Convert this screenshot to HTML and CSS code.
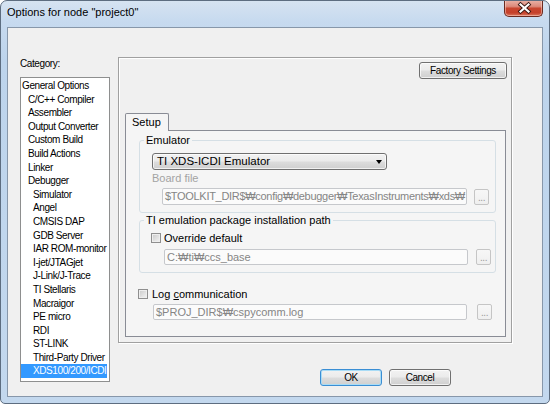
FILE: index.html
```html
<!DOCTYPE html>
<html>
<head>
<meta charset="utf-8">
<link rel="stylesheet" href="styles.css">
</head>
<body>
<div class="window">
  <div class="titlebar">
    <span class="title">Options for node "project0"</span>
    <div class="close">
      <svg width="39" height="17" viewBox="0 0 39 17">
        <path d="M16.5 4.5 L24.5 11.5 M24.5 4.5 L16.5 11.5" stroke="#3a1712" stroke-width="4" stroke-linecap="square" fill="none"/>
        <path d="M16.5 4.5 L24.5 11.5 M24.5 4.5 L16.5 11.5" stroke="#ffffff" stroke-width="2.2" stroke-linecap="square" fill="none"/>
      </svg>
    </div>
  </div>
  <div class="client">
    <div class="leftcol">
      <div class="cat-label">Category:</div>
      <ul class="list">
        <li class="l0">General Options</li>
        <li class="l1">C/C++ Compiler</li>
        <li class="l1">Assembler</li>
        <li class="l1">Output Converter</li>
        <li class="l1">Custom Build</li>
        <li class="l1">Build Actions</li>
        <li class="l1">Linker</li>
        <li class="l1">Debugger</li>
        <li class="l2">Simulator</li>
        <li class="l2">Angel</li>
        <li class="l2">CMSIS DAP</li>
        <li class="l2">GDB Server</li>
        <li class="l2">IAR ROM-monitor</li>
        <li class="l2">I-jet/JTAGjet</li>
        <li class="l2">J-Link/J-Trace</li>
        <li class="l2">TI Stellaris</li>
        <li class="l2">Macraigor</li>
        <li class="l2">PE micro</li>
        <li class="l2">RDI</li>
        <li class="l2">ST-LINK</li>
        <li class="l2">Third-Party Driver</li>
        <li class="l2 sel">XDS100/200/ICDI</li>
      </ul>
    </div>
    <div class="rightcol">
      <div class="panel">
        <div class="panel-top"><button class="btn factory">Factory Settings</button></div>
        <div class="tabs"><div class="tab">Setup</div></div>
        <div class="tabpage">
          <fieldset class="group g1">
            <legend>Emulator</legend>
            <div class="gbody g1body">
              <div class="combo"><span>TI XDS-ICDI Emulator</span><span class="arrow"></span></div>
              <div class="dim-label">Board file</div>
              <div class="path-row">
                <div class="textbox tb1">$TOOLKIT_DIR$₩config₩debugger₩TexasInstruments₩xds₩</div>
                <div class="browse b1">...</div>
              </div>
            </div>
          </fieldset>
          <fieldset class="group g2">
            <legend>TI emulation package installation path</legend>
            <div class="gbody g2body">
              <div class="check-row"><span class="checkbox"></span><span class="check-label">Override default</span></div>
              <div class="path-row r2">
                <div class="textbox tb2">C:₩ti₩ccs_base</div>
                <div class="browse b2">...</div>
              </div>
            </div>
          </fieldset>
          <div class="logsec">
            <div class="check-row logrow"><span class="checkbox"></span><span class="check-label">Log <span class="u">c</span>ommunication</span></div>
            <div class="path-row r3">
              <div class="textbox tb3">$PROJ_DIR$₩cspycomm.log</div>
              <div class="browse b3">...</div>
            </div>
          </div>
        </div>
      </div>
      <div class="buttons">
        <button class="btn ok">OK</button>
        <button class="btn cancel">Cancel</button>
      </div>
    </div>
  </div>
</div>
</body>
</html>
```
FILE: styles.css
```css
* { box-sizing: border-box; }
html, body { margin: 0; padding: 0; }
body {
  width: 550px;
  height: 404px;
  overflow: hidden;
  background: #ffffff;
  font-family: "Liberation Sans", Arial, sans-serif;
  color: #000;
}
.window {
  width: 550px;
  height: 404px;
  border: 1px solid #5d6d80;
  border-radius: 7px 7px 5px 5px;
  background: linear-gradient(180deg, #d6e3f1 0px, #c7daef 20px, #bdd4ec 60px, #c3d8ee 100%);
  display: flex;
  flex-direction: column;
  overflow: hidden;
}
.titlebar {
  height: 26px;
  display: flex;
  align-items: flex-start;
  justify-content: space-between;
  padding: 0 6px;
}
.title {
  font-size: 11px;
  line-height: 14px;
  margin-top: 4px;
  color: #000;
}
.close {
  width: 39px;
  height: 17px;
  margin-top: -1px;
  border: 1px solid #6a2a20;
  border-top: none;
  border-radius: 0 0 5px 5px;
  background: linear-gradient(180deg, #eab4a8 0%, #dc8a7b 40%, #c8462f 52%, #c5402a 80%, #d9775e 100%);
  box-shadow: inset 0 0 0 1px rgba(255, 220, 210, 0.5);
  position: relative;
}
.close svg { display: block; position: absolute; left: -1px; top: 0; }
.client {
  flex: 1;
  margin: 0 6px 6px;
  background: #f0f0f0;
  border: 1px solid #8797aa;
  display: flex;
  padding: 29px 0 0 12px;
  gap: 8px;
}
.leftcol {
  width: 90px;
  display: flex;
  flex-direction: column;
}
.cat-label {
  font-size: 10px;
  letter-spacing: -0.4px;
  line-height: 12px;
  margin-top: 1px;
}
.list {
  list-style: none;
  margin: 7px 0 0;
  padding: 1px 0 0;
  height: 305px;
  border: 1px solid #8e8f8f;
  background: #ffffff;
}
.list li {
  font-size: 10px;
  letter-spacing: -0.4px;
  height: 13.6px;
  line-height: 13.6px;
  white-space: nowrap;
}
.list .l0 { padding-left: 1px; }
.list .l1 { padding-left: 7px; }
.list .l2 { padding-left: 12px; }
.list .sel {
  background: #3399ff;
  color: #ffffff;
  margin-right: 2px;
}
.rightcol {
  width: 394px;
  display: flex;
  flex-direction: column;
}
.panel {
  height: 286px;
  border: 1px solid #a0a0a0;
  box-shadow: 1px 1px 0 #ffffff, inset 1px 1px 0 #ffffff;
  padding: 4px 4px 4px 6px;
  display: flex;
  flex-direction: column;
}
.panel-top {
  display: flex;
  justify-content: flex-end;
}
.btn {
  font-family: "Liberation Sans", Arial, sans-serif;
  font-size: 10px;
  letter-spacing: -0.4px;
  color: #000;
  height: 17px;
  padding: 0;
  border: 1px solid #707070;
  border-radius: 3px;
  background: linear-gradient(180deg, #f2f2f2 0%, #ebebeb 48%, #dddddd 52%, #cfcfcf 100%);
  box-shadow: inset 0 0 0 1px rgba(255, 255, 255, 0.7);
}
.factory { width: 88px; }
.tabs {
  display: flex;
  margin-top: 34px;
}
.tab {
  width: 44px;
  height: 18px;
  margin-bottom: -1px;
  border: 1px solid #898c95;
  border-bottom: none;
  border-radius: 2px 2px 0 0;
  background: #f5f5f5;
  font-size: 11px;
  line-height: 16px;
  padding-left: 6px;
  position: relative;
  z-index: 1;
}
.tabpage {
  height: 207px;
  margin-right: 1px;
  border: 1px solid #898c95;
  background: #f5f5f5;
  padding: 3px 9px 0 13px;
  font-size: 11px;
}
.group {
  margin: 0;
  padding: 0;
  border: 1px solid #d5dfe5;
  border-radius: 3px;
  min-width: 0;
}
.group legend {
  font-size: 11px;
  line-height: 12px;
  padding: 0 2px;
  margin-left: 4px;
}
.g2 { margin-top: 1px; }
.g1body { padding: 7px 0 7px 12px; }
.g2body { padding: 6px 0 7px 11px; }
.combo {
  width: 235px;
  height: 17px;
  border: 1px solid #707070;
  border-radius: 3px;
  background: linear-gradient(180deg, #f2f2f2 0%, #ebebeb 48%, #dddddd 52%, #cfcfcf 100%);
  box-shadow: inset 0 0 0 1px rgba(255, 255, 255, 0.7);
  display: flex;
  align-items: center;
  justify-content: space-between;
  padding: 0 4px 0 4px;
  font-size: 11.5px;
  line-height: 15px;
}
.arrow {
  width: 0;
  height: 0;
  border-left: 3.5px solid transparent;
  border-right: 3.5px solid transparent;
  border-top: 4px solid #000;
  margin-top: 1px;
}
.dim-label {
  margin-top: 2px;
  line-height: 12px;
  color: #a3a3a3;
}
.path-row {
  display: flex;
  align-items: center;
  margin-top: 4px;
}
.textbox {
  height: 17px;
  border: 1px solid #c6c8cc;
  border-radius: 2px;
  background: #fbfbfb;
  color: #858585;
  padding-left: 2px;
  line-height: 15px;
  white-space: nowrap;
  overflow: hidden;
}
.tb1 { width: 305px; margin-left: 10px; letter-spacing: -0.3px; }
.browse {
  width: 15px;
  height: 16px;
  border: 1px solid #c5c5c5;
  border-radius: 2px;
  background: linear-gradient(180deg, #f7f7f7, #efefef);
  color: #9a9a9a;
  font-size: 10px;
  line-height: 15px;
  text-align: center;
  letter-spacing: -0.5px;
}
.b1 { margin-left: 7px; }
.check-row {
  display: flex;
  align-items: center;
  height: 12px;
  line-height: 12px;
}
.checkbox {
  width: 10px;
  height: 10px;
  border: 1px solid #8f8f8f;
  background: linear-gradient(135deg, #c9c9c9 0%, #e3e3e3 60%, #f4f4f4 100%);
  box-shadow: inset 0 0 0 1px #eeeeee;
  margin-right: 3px;
}
.r2 { margin-top: 5px; }
.tb2 { width: 304px; height: 16px; line-height: 14px; margin-left: 13px; }
.b2 { margin-left: 8px; }
.logsec { margin-top: 15px; margin-left: -1px; }
.logrow .checkbox { margin-right: 4px; }
.u { text-decoration: underline; }
.r3 { margin-top: 4px; }
.tb3 { width: 314px; height: 16px; line-height: 14px; margin-left: 15px; }
.b3 { margin-left: 10px; }
.buttons {
  display: flex;
  justify-content: flex-end;
  gap: 7px;
  margin-top: 26px;
  padding-right: 61px;
}
.ok, .cancel { width: 62px; }
.ok {
  border-color: #3a8ed4;
  box-shadow: inset 0 0 0 1px #a9dcf6;
}
```
